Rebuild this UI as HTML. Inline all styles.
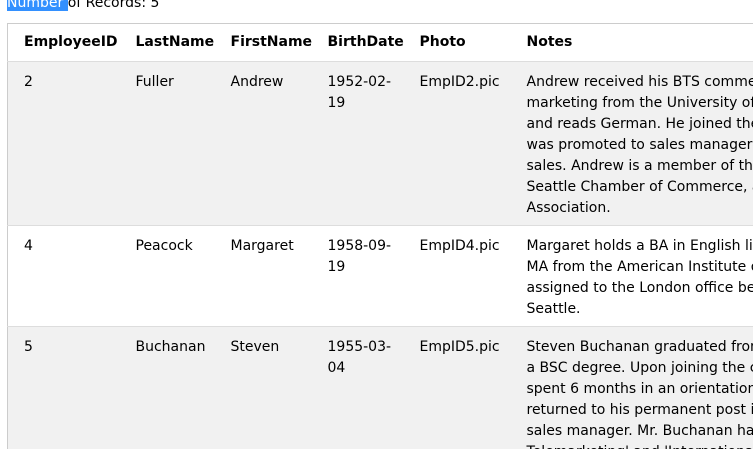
<!DOCTYPE html>
<html><head><style>
html,body{margin:0;padding:0;overflow:hidden;width:753px;height:449px;background:#fff;}
body{font-family:"DejaVu Sans","Liberation Sans",sans-serif;font-size:14px;color:#000;position:relative;}
.top{position:absolute;left:7px;top:-7px;line-height:21px;white-space:nowrap;}
.sel{background:#3390ff;color:#fff;}
.wrap{position:absolute;left:0;top:0;width:753px;height:449px;overflow:hidden;}
table{position:absolute;left:7px;top:23px;border-collapse:collapse;table-layout:fixed;width:1000px;border:1px solid #ccc;}
td,th{padding:0 0 0 16px;vertical-align:top;text-align:left;line-height:21px;white-space:nowrap;overflow:hidden;}
th{font-weight:bold;height:37px;vertical-align:middle;}
tr{border-bottom:1px solid #ddd;}
tr.g{background:#f1f1f1;}
td{padding-top:10px;}
</style></head><body>
<div class="wrap">
<div class="top"><span class="sel">Number </span>of Records: 5</div>
<table>
<colgroup><col style="width:112px"><col style="width:95px"><col style="width:97px"><col style="width:92px"><col style="width:107px"><col style="width:497px"></colgroup>
<tr><th>EmployeeID</th><th>LastName</th><th>FirstName</th><th>BirthDate</th><th>Photo</th><th>Notes</th></tr>
<tr class="g" style="height:164px"><td>2</td><td>Fuller</td><td>Andrew</td><td>1952-02-<br>19</td><td>EmpID2.pic</td><td>Andrew received his BTS commercial in 1974 and a Ph.D. in international<br>marketing from the University of Dallas in 1981. He is fluent in French<br>and reads German. He joined the company as a sales representative,<br>was promoted to sales manager in January 1992 and to vice president of<br>sales. Andrew is a member of the Sales Management Roundtable, the<br>Seattle Chamber of Commerce, and the Pacific Rim Importers<br>Association.</td></tr>
<tr style="height:101px"><td>4</td><td>Peacock</td><td>Margaret</td><td>1958-09-<br>19</td><td>EmpID4.pic</td><td>Margaret holds a BA in English literature from Concordia College and an<br>MA from the American Institute of Culinary Arts. She was temporarily<br>assigned to the London office before returning to her permanent post in<br>Seattle.</td></tr>
<tr class="g" style="height:200px"><td>5</td><td>Buchanan</td><td>Steven</td><td>1955-03-<br>04</td><td>EmpID5.pic</td><td>Steven Buchanan graduated from St. Andrews University, Scotland, with<br>a BSC degree. Upon joining the company as a sales representative, he<br>spent 6 months in an orientation program at the Seattle office and then<br>returned to his permanent post in London, where he was promoted to<br>sales manager. Mr. Buchanan has completed the courses 'Successful<br>Telemarketing' and 'International Sales Management'.</td></tr>
</table>
</div>
</body></html>
